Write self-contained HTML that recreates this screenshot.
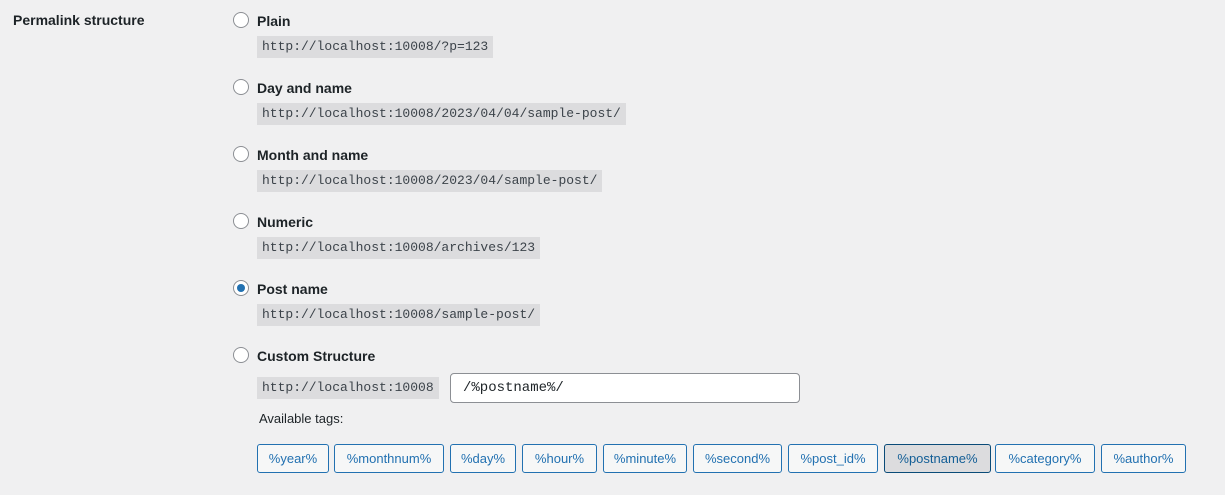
<!DOCTYPE html><html><head><style>
body{margin:0;background:#f0f0f1;width:1225px;height:495px;position:relative;font-family:"Liberation Sans",sans-serif;color:#1d2327;font-size:14px;overflow:hidden}
.a{position:absolute}
.th{left:13px;top:12px;font-weight:600;font-size:14px}
.r{width:14px;height:14px;border:1px solid #8c8f94;border-radius:50%;background:#fff;left:233px}
.r.on::after{content:"";position:absolute;left:3px;top:3px;width:8px;height:8px;border-radius:50%;background:#2271b1}
.lb{left:257px;font-weight:600}
code{position:absolute;left:257px;background:#dcdcde;font-family:"Liberation Mono",monospace;font-size:13px;padding:0 5px;height:22px;line-height:22px;color:#3c434a}
.in{left:450px;top:373px;border:1px solid #8c8f94;border-radius:4px;background:#fff;font-family:"Liberation Mono",monospace;font-size:14px;line-height:28px;padding-left:12px;box-sizing:border-box;width:350px;height:30px}
.b{top:444px;height:29px;box-sizing:border-box;border:1px solid #2271b1;border-radius:3px;background:#f6f7f7;color:#2271b1;font-size:13px;line-height:27px;text-align:center}
.b.s{background:#dcdcde;color:#135e96;border-color:#0a4b78}
</style></head><body>
<div class="a th">Permalink structure</div>
<div class="a r" style="top:12px"></div><div class="a lb" style="top:13px">Plain</div><code style="top:36px">http://localhost:10008/?p=123</code>
<div class="a r" style="top:79px"></div><div class="a lb" style="top:80px">Day and name</div><code style="top:103px">http://localhost:10008/2023/04/04/sample-post/</code>
<div class="a r" style="top:146px"></div><div class="a lb" style="top:147px">Month and name</div><code style="top:170px">http://localhost:10008/2023/04/sample-post/</code>
<div class="a r" style="top:213px"></div><div class="a lb" style="top:214px">Numeric</div><code style="top:237px">http://localhost:10008/archives/123</code>
<div class="a r on" style="top:280px"></div><div class="a lb" style="top:281px">Post name</div><code style="top:304px">http://localhost:10008/sample-post/</code>
<div class="a r" style="top:347px"></div><div class="a lb" style="top:348px">Custom Structure</div><code style="top:377px">http://localhost:10008</code>
<div class="a in">/%postname%/</div>
<div class="a" style="left:259px;top:411px;font-size:13px">Available tags:</div>
<div class="a b" style="left:257px;width:72px">%year%</div>
<div class="a b" style="left:334px;width:110px">%monthnum%</div>
<div class="a b" style="left:450px;width:66px">%day%</div>
<div class="a b" style="left:522px;width:75px">%hour%</div>
<div class="a b" style="left:603px;width:84px">%minute%</div>
<div class="a b" style="left:693px;width:89px">%second%</div>
<div class="a b" style="left:788px;width:90px">%post_id%</div>
<div class="a b s" style="left:884px;width:107px">%postname%</div>
<div class="a b" style="left:995px;width:100px">%category%</div>
<div class="a b" style="left:1101px;width:85px">%author%</div>
</body></html>
